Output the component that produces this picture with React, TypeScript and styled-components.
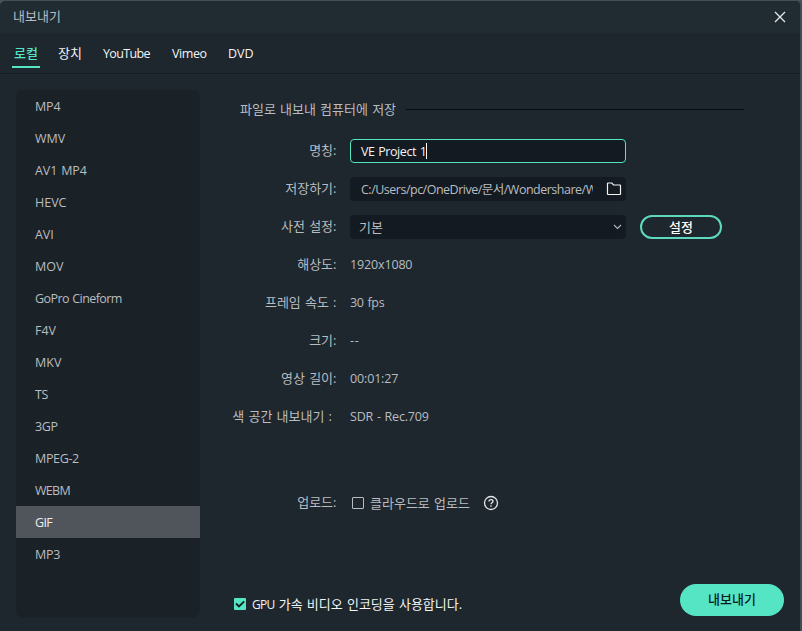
import React from 'react';
import styled, { createGlobalStyle, css } from 'styled-components';

const mint = '#55e5c5';
const text = '#b9bdc0';

const Global = createGlobalStyle`
  * { box-sizing: border-box; }
  html, body, #root { margin: 0; padding: 0; height: 100%; }
  body {
    overflow: hidden;
    background: #4b545b;
    font-family: 'Open Sans', 'Noto Sans CJK KR', sans-serif;
    font-size: 13px;
    line-height: 18px;
    color: ${text};
  }
  button, input { font: inherit; }
`;

const Dialog = styled.main`
  width: 802px;
  height: 631px;
  display: flex;
  flex-direction: column;
  background: #1e262e;
  border-top: 1px solid #444f57;
  border-right: 2px solid #414b53;
  border-radius: 6px 6px 0 0;
  overflow: hidden;
`;

const TitleBar = styled.header`
  height: 32px;
  flex: none;
  display: flex;
  align-items: center;
  justify-content: space-between;
  padding: 0 14px 0 13px;
  background: #212b32;
`;

const CloseButton = styled.button`
  display: flex;
  padding: 0;
  border: 0;
  background: none;
`;

/* Latin text is set a little smaller than Hangul so both share one cap height. */
const Label = styled.span<{ $size?: number; $track?: number; $bright?: boolean; $bold?: boolean; $word?: number }>`
  white-space: pre;
  font-size: ${(p) => p.$size ?? 13}px;
  letter-spacing: ${(p) => p.$track ?? 0}px;
  word-spacing: ${(p) => p.$word ?? 0.8}px;
  ${(p) => p.$bright && css`color: #f2f4f5;`}
  ${(p) => p.$bold && css`font-weight: 500;`}
`;

const TitleText = styled(Label)`
  padding-bottom: 2px;
`;

const Tabs = styled.nav`
  height: 41px;
  flex: none;
  display: flex;
  padding-left: 12px;
  border-bottom: 1px solid #151c22;
`;

const Tab = styled.a<{ $width: number; $active?: boolean }>`
  width: ${(p) => p.$width}px;
  height: 35px;
  padding: 11px 0 0 2px;
  color: ${(p) => (p.$active ? mint : '#f2f4f5')};
  font-weight: ${(p) => (p.$active ? 500 : 400)};
  border-bottom: 2px solid ${(p) => (p.$active ? mint : 'transparent')};
  margin-right: 16px;
`;

const Body = styled.div`
  flex: 1;
  display: flex;
  padding: 16px 16px 13px;
`;

const FormatList = styled.ul`
  width: 184px;
  height: 528px;
  margin: 0;
  padding: 0;
  list-style: none;
  background: #1a2127;
  border-radius: 8px;
`;

const Format = styled.li<{ $selected?: boolean }>`
  height: 32px;
  padding: 2px 0 0 19px;
  display: flex;
  align-items: center;
  color: ${(p) => (p.$selected ? '#eceeef' : text)};
  background: ${(p) => (p.$selected ? '#50555b' : 'transparent')};
`;

const Settings = styled.section`
  flex: 1;
  display: flex;
  flex-direction: column;
  padding: 10px 0 0 32px;
`;

const Legend = styled.div`
  display: flex;
  align-items: center;
  gap: 10px;
  height: 18px;
  margin: 0 40px 14px 8px;
  &::after {
    content: '';
    flex: 1;
    height: 1px;
    background: #070b10;
  }
`;

const Row = styled.div<{ $gap?: number }>`
  display: flex;
  align-items: center;
  height: 38px;
  margin-top: ${(p) => p.$gap ?? 0}px;
`;

const RowName = styled.div<{ $inset?: number }>`
  width: 118px;
  flex: none;
  display: flex;
  justify-content: flex-end;
  padding: 0 ${(p) => p.$inset ?? 13.5}px 2px 0;
`;

const Field = styled.div<{ $focus?: boolean; $pad?: string }>`
  width: 276px;
  height: 24px;
  flex: none;
  display: flex;
  align-items: center;
  justify-content: space-between;
  padding: ${(p) => p.$pad ?? '0 3px 0 10px'};
  border-radius: 4px;
  background: #131a21;
  border: 1px solid ${(p) => (p.$focus ? mint : '#131a21')};
`;

const Typed = styled.span`
  display: flex;
  align-items: center;
  height: 16px;
  padding-top: 2px;
  border-right: 1px solid #fff;
`;

const Clip = styled.span`
  width: 232px;
  overflow: hidden;
  white-space: nowrap;
`;

const OutlineButton = styled.button`
  width: 82px;
  height: 24px;
  margin-left: 14px;
  padding: 0;
  border: 2px solid #5dd9bd;
  border-radius: 12px;
  background: #1e262e;
  color: #fff;
  line-height: 18px;
`;

const CheckBox = styled.span<{ $checked?: boolean }>`
  width: 12px;
  height: 12px;
  flex: none;
  display: flex;
  border: ${(p) => (p.$checked ? '0' : '1px solid #b9bdc0')};
  border-radius: 1px;
  background: ${(p) => (p.$checked ? mint : 'transparent')};
`;

const CloudOption = styled.label`
  display: flex;
  align-items: center;
  gap: 6px;
  margin: 0 13px 0 2px;
`;

const Footer = styled.footer`
  display: flex;
  align-items: center;
  justify-content: space-between;
  height: 32px;
  margin: auto 0 2px 2px;
`;

const GpuOption = styled.label`
  display: flex;
  align-items: center;
  gap: 6px;
  padding-top: 8px;
`;

const ExportButton = styled.button`
  width: 104px;
  height: 32px;
  padding: 0 0 2px;
  border: 0;
  border-radius: 16px;
  background: ${mint};
  color: #0c1a1c;
`;

const formats: [string, number?][] = [
  ['MP4', -0.15], ['WMV'], ['AV1 MP4', -0.1], ['HEVC'], ['AVI', -0.1], ['MOV'], ['GoPro Cineform', -0.58], ['F4V'],
  ['MKV'], ['TS', -0.4], ['3GP', -0.4], ['MPEG-2', -0.35], ['WEBM', -0.7], ['GIF', -0.7], ['MP3', -0.3],
];

const details = [
  { name: '해상도:', value: '1920x1080', track: -0.15 },
  { name: '프레임 속도 :', value: '30 fps', track: -0.3 },
  { name: '크기:', value: '--', track: 0.8 },
  { name: '영상 길이:', value: '00:01:27', track: -0.15 },
  { name: '색 공간 내보내기 :', value: 'SDR - Rec.709', inset: 18, track: -0.2 },
];

const CloseIcon = () => (
  <svg width="12" height="12" viewBox="0 0 12 12" stroke="#e6e9ea" strokeWidth="1.3">
    <path d="M1 1l10 10M11 1L1 11" />
  </svg>
);

const FolderIcon = () => (
  <svg width="16" height="14" viewBox="0 0 16 14" fill="none" stroke="#f4f4f4" strokeWidth="1.2">
    <path d="M1.500 12v-10.500q0-.5.5-.5h3.800l1.700 2h6.500q.5 0 .5.5v8.500q0 .5-.5.5H2q-.5 0-.5-.5z" />
  </svg>
);

const ChevronIcon = () => (
  <svg width="9" height="6" viewBox="0 0 9 6" fill="none" stroke="#b3b8bb" strokeWidth="1.1">
    <path d="M1 1l3.500 3.500L8 1" />
  </svg>
);

const CheckIcon = () => (
  <svg width="12" height="12" viewBox="0 0 12 12" fill="none" stroke="#10201f" strokeWidth="1.8">
    <path d="M2 5.500l3 3L10.200 3.300" />
  </svg>
);

const HelpIcon = () => (
  <svg width="16" height="16" viewBox="0 0 16 16" fill="none" stroke="#e4e6e7" strokeWidth="1.3">
    <circle cx="8" cy="8" r="6.500" />
    <path d="M6 6.600C6 5.300 6.800 4.700 8 4.700s2 .7 2 1.700c0 1.300-2 1.400-2 2.800M8 10.300v1.400" />
  </svg>
);

export default function App() {
  return (
    <>
      <Global />
      <Dialog>
        <TitleBar>
          <TitleText>내보내기</TitleText>
          <CloseButton aria-label="닫기"><CloseIcon /></CloseButton>
        </TitleBar>
        <Tabs>
          <Tab $width={28} $active><Label>로컬</Label></Tab>
          <Tab $width={29}><Label>장치</Label></Tab>
          <Tab $width={53}><Label $size={12.5} $track={-0.65}>YouTube</Label></Tab>
          <Tab $width={40}><Label $size={12.5} $track={-0.4}>Vimeo</Label></Tab>
          <Tab $width={30}><Label $size={12.5}>DVD</Label></Tab>
        </Tabs>
        <Body>
          <FormatList>
            {formats.map(([name, track]) => (
              <Format key={name} $selected={name === 'GIF'}>
                <Label $size={12.5} $track={track}>{name}</Label>
              </Format>
            ))}
          </FormatList>
          <Settings>
            <Legend><Label>파일로 내보내 컴퓨터에 저장</Label></Legend>
            <Row>
              <RowName><Label>명칭:</Label></RowName>
              <Field $focus>
                <Typed><Label $size={12.5} $track={-0.42} $bright>VE Project 1</Label></Typed>
              </Field>
            </Row>
            <Row>
              <RowName><Label>저장하기:</Label></RowName>
              <Field>
                <Clip><Label $size={12.5} $track={-0.5}>C:/Users/pc/OneDrive/문서/Wondershare/W</Label></Clip>
                <FolderIcon />
              </Field>
            </Row>
            <Row>
              <RowName><Label>사전 설정:</Label></RowName>
              <Field $pad="0 3px 0 8px">
                <Label>기본</Label>
                <ChevronIcon />
              </Field>
              <OutlineButton><Label $bold>설정</Label></OutlineButton>
            </Row>
            {details.map((d) => (
              <Row key={d.name}>
                <RowName $inset={d.inset}><Label>{d.name}</Label></RowName>
                <Label $size={12.5} $track={d.track}>{d.value}</Label>
              </Row>
            ))}
            <Row $gap={48}>
              <RowName><Label>업로드:</Label></RowName>
              <CloudOption>
                <CheckBox />
                <Label>클라우드로 업로드</Label>
              </CloudOption>
              <HelpIcon />
            </Row>
            <Footer>
              <GpuOption>
                <CheckBox $checked><CheckIcon /></CheckBox>
                <Label $bright><Label $size={12} $track={-0.7}>GPU</Label> 가속 비디오 인코딩을 사용합니다.</Label>
              </GpuOption>
              <ExportButton><Label $bold>내보내기</Label></ExportButton>
            </Footer>
          </Settings>
        </Body>
      </Dialog>
    </>
  );
}
